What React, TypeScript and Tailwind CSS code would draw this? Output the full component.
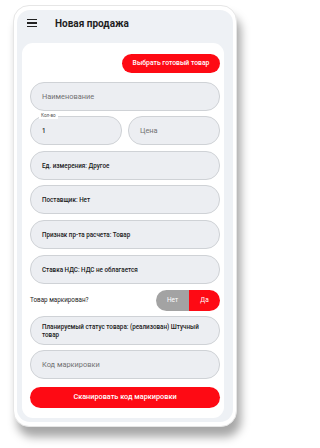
import React from 'react';

const field =
  'h-[29px] w-full flex items-center rounded-[14px] border border-[#cfd2d6] bg-[#eceef2] pl-[11px] pr-[8px]';

function Field({ text, placeholder }: { text?: string; placeholder?: string }) {
  return (
    <div className={field}>
      {text ? (
        <span className="text-[6.3px] font-medium text-[#1a1a1a] leading-[8px]">{text}</span>
      ) : (
        <span className="text-[7.4px] text-[#727272]">{placeholder}</span>
      )}
    </div>
  );
}

export default function App() {
  return (
    <div
      className="w-[250px] h-[448px] bg-white pt-[5px] pl-[13px]"
      style={{ fontFamily: 'Roboto, "Liberation Sans", sans-serif' }}
    >
      <div className="w-[224px] h-[422px] rounded-[16px] bg-white border border-[#e6e6e6] px-[3px] py-[4px] shadow-[4px_10px_10px_rgba(0,0,0,0.35)]">
        <div className="w-[216px] h-[412px] rounded-[13px] bg-[#eef1f5] flex flex-col">
          <div className="h-[26px] flex items-center px-[10px] gap-[18px]">
            <div className="flex flex-col gap-[2px]">
              <div className="w-[10px] h-[1.6px] bg-[#222]" />
              <div className="w-[10px] h-[1.6px] bg-[#222]" />
              <div className="w-[10px] h-[1.6px] bg-[#222]" />
            </div>
            <span className="text-[10px] font-bold text-[#1e1e1e]">Новая продажа</span>
          </div>
          <div className="mt-[7px] ml-[5px] w-[202px] h-[375px] rounded-[11px] bg-white pt-[11px] pl-[8px] pr-[4px] flex flex-col">
            <div className="flex justify-end">
              <button className="h-[19px] w-[98px] rounded-full bg-[#fe0a14] text-white text-[6.8px] font-medium">
                Выбрать готовый товар
              </button>
            </div>
            <div className="mt-[9px]">
              <Field placeholder="Наименование" />
            </div>
            <div className="mt-[5px] flex gap-[6px]">
              <div className="relative w-[92px]">
                <Field text="1" />
                <span className="absolute left-[9px] top-[-3px] bg-white px-[2px] text-[4.6px] leading-[6px] text-[#555]">
                  Кол-во
                </span>
              </div>
              <div className="flex-1">
                <Field placeholder="Цена" />
              </div>
            </div>
            <div className="mt-[6px]">
              <Field text="Ед. измерения: Другое" />
            </div>
            <div className="mt-[5px]">
              <Field text="Поставщик: Нет" />
            </div>
            <div className="mt-[6px]">
              <Field text="Признак пр-та расчета: Товар" />
            </div>
            <div className="mt-[6px]">
              <Field text="Ставка НДС: НДС не облагается" />
            </div>
            <div className="mt-[6px] h-[21px] flex items-center justify-between">
              <span className="text-[6.3px] text-[#222]">Товар маркирован?</span>
              <div className="flex h-[21px] w-[64px] rounded-full overflow-hidden text-[6.5px] text-white">
                <div className="w-[33px] bg-[#a3a3a3] flex items-center justify-center">Нет</div>
                <div className="flex-1 bg-[#fe0a14] flex items-center justify-center">Да</div>
              </div>
            </div>
            <div className="mt-[5px]">
              <Field text="Планируемый статус товара: (реализован) Штучный товар" />
            </div>
            <div className="mt-[5px]">
              <Field placeholder="Код маркировки" />
            </div>
            <button className="mt-[8px] h-[21px] w-full rounded-full bg-[#fe0a14] text-white text-[7.3px] font-medium">
              Сканировать код маркировки
            </button>
          </div>
        </div>
      </div>
    </div>
  );
}
